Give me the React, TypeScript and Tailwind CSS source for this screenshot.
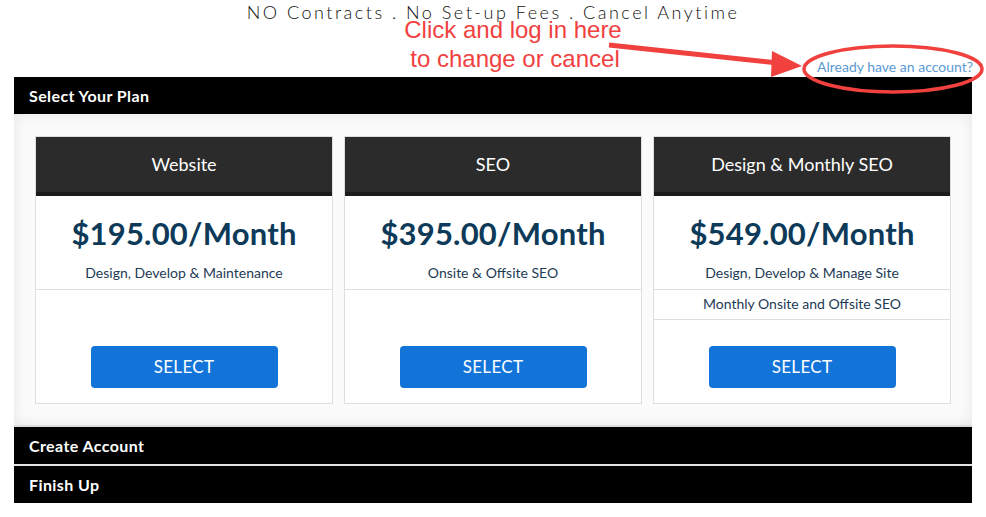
import React from "react";

type Plan = { name: string; price: string; features: string[] };

const plans: Plan[] = [
  { name: "Website", price: "$195.00/Month", features: ["Design, Develop & Maintenance"] },
  { name: "SEO", price: "$395.00/Month", features: ["Onsite & Offsite SEO"] },
  {
    name: "Design & Monthly SEO",
    price: "$549.00/Month",
    features: ["Design, Develop & Manage Site", "Monthly Onsite and Offsite SEO"],
  },
];

function Card({ plan }: { plan: Plan }) {
  return (
    <div className="flex flex-col border border-[#dedede] bg-white h-[268px]">
      <div className="h-[55px] bg-[#2b2b2b] flex items-center justify-center text-white text-[18px] font-['Lato',sans-serif]">
        {plan.name}
      </div>
      <div className="h-[4px] bg-[#1b1b1b]" />
      <div className="pt-[18px] text-center">
        <div className="text-[31px] leading-[38px] font-bold text-[#0d3a58] font-['Lato',sans-serif] tracking-[0.2px]">
          {plan.price}
        </div>
        <div className="text-[14px] leading-[17px] text-[#1d3b55] font-['Lato',sans-serif] pt-[12px] pb-[8px] border-b border-[#dedede]">
          {plan.features[0]}
        </div>
        {plan.features.slice(1).map((f) => (
          <div
            key={f}
            className="text-[14px] leading-[17px] text-[#1d3b55] font-['Lato',sans-serif] pt-[5px] pb-[7px] border-b border-[#dedede]"
          >
            {f}
          </div>
        ))}
      </div>
      <div className="mt-auto flex justify-center pb-[15px]">
        <button className="w-[187px] h-[42px] rounded-[4px] bg-[#1274d9] text-white text-[17px] font-['Lato',sans-serif] tracking-[0.3px]">
          SELECT
        </button>
      </div>
    </div>
  );
}

function Bar({ label }: { label: string }) {
  return (
    <div className="h-[37px] bg-black flex items-center pl-[15px] text-white text-[16px] tracking-[0.4px] font-bold font-['Lato',sans-serif]">
      {label}
    </div>
  );
}

export default function App() {
  return (
    <div className="relative w-[986px] h-[517px] bg-white overflow-hidden">
      <div className="pt-[2px] h-[26px] text-center text-[18px] leading-[20px] tracking-[2.5px] text-[#111] font-['Lato',sans-serif] font-light">
        NO Contracts . No Set-up Fees . Cancel Anytime
      </div>
      <div className="h-[51px] flex justify-end items-end pr-[13px] pb-[2px]">
        <a className="text-[14px] leading-[17px] text-[#5c9ad3] font-['Lato',sans-serif]">
          Already have an account?
        </a>
      </div>
      <div className="mx-[14px]">
        <Bar label="Select Your Plan" />
        <div className="bg-[#fbfbfb] shadow-[inset_0_0_14px_rgba(0,0,0,0.09)] border-b-[2px] border-[#dcdcdc] px-[21px] pt-[22px] pb-[21px] grid grid-cols-3 gap-[11px]">
          {plans.map((p) => (
            <Card key={p.name} plan={p} />
          ))}
        </div>
        <Bar label="Create Account" />
        <div className="h-[2px] bg-[#e4e4e4]" />
        <Bar label="Finish Up" />
      </div>

      {/* annotation overlay */}
      <div className="absolute left-[400px] top-[15px] text-[#f0413f] text-[24px] leading-[29px] font-['Liberation_Sans',Arial,sans-serif] text-center w-[226px]">
        <div>Click and log in here</div>
        <div className="pl-[4px]">to change or cancel</div>
      </div>
      <svg className="absolute left-0 top-0 pointer-events-none" width="986" height="517">
        <line x1="609" y1="45" x2="778" y2="63" stroke="#f0413f" strokeWidth="5" />
        <polygon points="802,66 772,51 771,77" fill="#f0413f" />
        <ellipse cx="893" cy="69" rx="89" ry="23" fill="none" stroke="#f0413f" strokeWidth="3.5" />
      </svg>
    </div>
  );
}
